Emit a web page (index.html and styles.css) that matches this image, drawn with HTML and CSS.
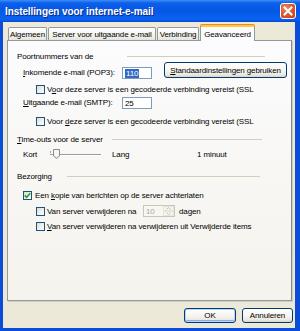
FILE: index.html
```html
<!DOCTYPE html>
<html lang="nl">
<head>
<meta charset="utf-8">
<title>Instellingen voor internet-e-mail</title>
<link rel="stylesheet" href="styles.css">
</head>
<body>
<div class="window">
  <div class="titlebar">
    <span class="title">Instellingen voor internet-e-mail</span>
    <span class="close"><svg width="10" height="10" viewBox="0 0 10 10"><path d="M1.5 1.5 L8.5 8.5 M8.5 1.5 L1.5 8.5" stroke="#fff" stroke-width="2" stroke-linecap="square"/></svg></span>
  </div>
  <div class="client">
    <div class="tabs">
      <div class="tab t1">Algemeen</div>
      <div class="tab t2">Server voor uitgaande e-mail</div>
      <div class="tab t3">Verbinding</div>
      <div class="tab t4 active">Geavanceerd</div>
    </div>
    <div class="panel">
      <div class="ghead gh1"><span class="glabel">Poortnummers van de</span><span class="gline"></span></div>
      <div class="row r-pop">
        <span class="flabel"><u>I</u>nkomende e-mail (POP3):</span>
        <span class="textbox"><span class="sel">110</span></span>
        <button class="btn wide"><u>S</u>tandaardinstellingen gebruiken</button>
      </div>
      <div class="row r-cb1 indent2"><span class="cb"></span><span class="cbtext">V<u>o</u>or deze server is een gecodeerde verbinding vereist (SSL</span></div>
      <div class="row r-smtp">
        <span class="flabel"><u>U</u>itgaande e-mail (SMTP):</span>
        <span class="textbox">25</span>
      </div>
      <div class="row r-cb2 indent2"><span class="cb"></span><span class="cbtext">Voor <u>d</u>eze server is een gecodeerde verbinding vereist (SSL</span></div>
      <div class="ghead gh2"><span class="glabel"><u>T</u>ime-outs voor de server</span><span class="gline"></span></div>
      <div class="row r-slider">
        <span class="kort">Kort</span>
        <svg class="slider" width="56" height="10" viewBox="0 0 56 10">
          <rect x="2" y="5" width="51" height="1" fill="#9d9c99"/>
          <rect x="2" y="6" width="51" height="1" fill="#ffffff"/>
          <path d="M2.5 2 v2" stroke="#a0a0a0" stroke-width="1"/>
          <path d="M5.5 0.5 h6 v6.5 l-3 2.5 l-3 -2.5 z" fill="#f7f7f4" stroke="#8c8c86" stroke-width="1"/>
          <path d="M6.5 7 l2 1.6 l2 -1.6" fill="none" stroke="#c8c6bc" stroke-width="0.8"/>
        </svg>
        <span class="lang">Lang</span>
        <span class="minuut">1 minuut</span>
      </div>
      <div class="ghead gh3"><span class="glabel">Bezorging</span><span class="gline"></span></div>
      <div class="row r-cbk indent1">
        <span class="cb checked"><svg width="7" height="7" viewBox="0 0 7 7"><path d="M0.8 3.4 L2.6 5.4 L6.2 1.2" fill="none" stroke="#21a121" stroke-width="1.6"/></svg></span>
        <span class="cbtext">Een <u>k</u>opie van berichten op de server achterlaten</span>
      </div>
      <div class="row r-cbs indent2">
        <span class="cb"></span>
        <span class="cbtext na">Van server verwijderen na</span>
        <span class="spin"><span class="spinval">10</span><span class="spinbtns"><span class="sb"><svg width="5" height="3" viewBox="0 0 5 3"><path d="M0.5 2.5 L2.5 0.5 L4.5 2.5" fill="none" stroke="#c2c0b6" stroke-width="0.9"/></svg></span><span class="sb"><svg width="5" height="3" viewBox="0 0 5 3"><path d="M0.5 0.5 L2.5 2.5 L4.5 0.5" fill="none" stroke="#c2c0b6" stroke-width="0.9"/></svg></span></span></span>
        <span class="dagen">dagen</span>
      </div>
      <div class="row r-cbv indent2"><span class="cb"></span><span class="cbtext"><u>V</u>an server verwijderen na verwijderen uit Verwijderde items</span></div>
    </div>
    <div class="buttons">
      <button class="btn ok">OK</button>
      <button class="btn cancel">Annuleren</button>
    </div>
  </div>
</div>
</body>
</html>
```
FILE: styles.css
```css
* { box-sizing: border-box; }
html, body { margin: 0; padding: 0; }
body {
  width: 300px;
  height: 331px;
  overflow: hidden;
  background: #ffffff;
  font-family: "Liberation Sans", Arial, sans-serif;
  font-size: 8px;
  letter-spacing: -0.12px;
  color: #000;
}
u { text-decoration: underline; text-underline-offset: 1px; }

.window {
  width: 300px;
  height: 331px;
  display: flex;
  flex-direction: column;
  background: #0b4cd9;
}

.titlebar {
  height: 22px;
  flex: none;
  display: flex;
  align-items: center;
  justify-content: space-between;
  padding: 0 4px 0 5px;
  background: linear-gradient(180deg, #3d8ef8 0%, #0c5fe9 14%, #0557e4 45%, #0761f0 82%, #0a5ce8 92%, #0444cc 100%);
}
.title {
  color: #fff;
  font-weight: bold;
  font-size: 10px;
  letter-spacing: -0.1px;
  text-shadow: 1px 1px 0 #0a2a8a;
  white-space: nowrap;
}
.close {
  width: 16px;
  height: 16px;
  display: flex;
  align-items: center;
  justify-content: center;
  border: 1px solid #ffffff;
  border-radius: 3px;
  background: radial-gradient(circle at 35% 30%, #ef8a66 0%, #e05a32 45%, #c4401a 100%);
}

.client {
  flex: 1;
  margin: 0 5px 3px 3px;
  background: #ece9d8;
  display: flex;
  flex-direction: column;
  padding: 3px 0 0 4px;
}

.tabs {
  height: 15px;
  display: flex;
  align-items: flex-end;
  gap: 1px;
  padding-left: 1px;
  position: relative;
  z-index: 2;
}
.tab {
  height: 13px;
  display: flex;
  align-items: center;
  justify-content: center;
  border: 1px solid #919b9c;
  border-bottom: none;
  border-radius: 2px 2px 0 0;
  background: linear-gradient(180deg, #ffffff 0%, #f4f3ee 60%, #e6e4da 100%);
  white-space: nowrap;
  padding-top: 1px;
}
.t1 { width: 39px; }
.t2 { width: 108px; }
.t3 { width: 42px; }
.t4 { width: 55px; }
.tab.active {
  height: 16px;
  margin-bottom: -1px;
  background: #fcfcfe;
  border-top: 2px solid #ffc83c;
  box-shadow: 0 -1px 0 #e68b2c;
  padding-top: 0;
}

.panel {
  width: 285px;
  height: 261px;
  flex: none;
  border: 1px solid #919b9c;
  border-right-color: #848c8d;
  box-shadow: 1px 1px 0 #d0cdbd;
  background: linear-gradient(180deg, #fcfcfe 0%, #f7f6f2 60%, #f4f3ee 100%);
  padding: 10px 0 0 9px;
  display: flex;
  flex-direction: column;
}

.ghead {
  height: 10px;
  display: flex;
  align-items: center;
}
.glabel { white-space: nowrap; }
.gline {
  flex: 1;
  height: 1px;
  background: #d0d0bf;
}
.gh1 { width: 248px; }
.gh1 .glabel { width: 110px; }
.gh2 { width: 245px; margin-top: 8px; }
.gh2 .glabel { width: 95px; }
.gh3 { width: 243px; margin-top: 12px; }
.gh3 .glabel { width: 50px; }

.row {
  display: flex;
  align-items: center;
  height: 10px;
  white-space: nowrap;
}
.indent1 { padding-left: 6px; }
.indent2 { padding-left: 19px; }

.r-pop { margin-top: 1px; height: 17px; align-items: flex-end; padding-left: 6px; }
.r-cb1 { margin-top: 5px; }
.r-smtp { margin-top: 3px; height: 12px; padding-left: 6px; }
.r-cb2 { margin-top: 7px; }
.r-slider { margin-top: 5px; padding-left: 6px; }
.r-cbk { margin-top: 9px; }
.r-cbs { margin-top: 5px; height: 12px; }
.r-cbv { margin-top: 4px; }

.flabel {
  width: 99px;
  line-height: 12px;
  height: 12px;
}
.textbox {
  width: 30px;
  height: 12px;
  border: 1px solid #7f9db9;
  background: #fff;
  display: flex;
  align-items: center;
  padding-left: 2px;
}
.sel {
  background: #316ac5;
  color: #fff;
  line-height: 9px;
  padding: 0 1px;
}

.btn {
  font-family: "Liberation Sans", Arial, sans-serif;
  font-size: 8px;
  letter-spacing: -0.12px;
  color: #000;
  height: 16px;
  padding: 0;
  border: 1px solid #003c74;
  border-radius: 3px;
  background: linear-gradient(180deg, #ffffff 0%, #f5f4ef 55%, #e9e7de 85%, #d8d5c6 100%);
  display: flex;
  align-items: center;
  justify-content: center;
  white-space: nowrap;
}
.btn.wide {
  width: 123px;
  margin-left: 12px;
  margin-bottom: 1px;
}

.cb {
  width: 9px;
  height: 9px;
  flex: none;
  border: 1px solid #1c5180;
  background: linear-gradient(135deg, #dcdcd7 0%, #f1f1ee 60%, #ffffff 100%);
  display: flex;
  align-items: center;
  justify-content: center;
}
.cbtext { margin-left: 2px; }
.r-cbk .cbtext { margin-left: 3px; }
.cbtext.na { width: 96px; }

.kort { width: 25px; }
.slider { flex: none; }
.lang { margin-left: 8px; width: 85px; }

.spin {
  width: 32px;
  height: 12px;
  border: 1px solid #c9c7ba;
  background: #f7f6f1;
  display: flex;
  align-items: stretch;
}
.spinval {
  flex: 1;
  color: #aca899;
  padding-left: 2px;
  display: flex;
  align-items: center;
}
.spinbtns {
  width: 11px;
  display: flex;
  flex-direction: column;
}
.sb {
  flex: 1;
  display: flex;
  align-items: center;
  justify-content: center;
  background: #f4f3ee;
  border: 1px solid #e8e6dc;
}
.dagen { margin-left: 4px; }

.buttons {
  display: flex;
  justify-content: flex-end;
  gap: 6px;
  margin-top: 7px;
  padding-right: 2px;
}
.buttons .btn { height: 15px; }
.btn.ok {
  width: 52px;
  box-shadow: inset 0 0 0 1px #bcd4f6, inset 0 -1px 0 1px #89adeb;
}
.btn.cancel { width: 51px; }
```
